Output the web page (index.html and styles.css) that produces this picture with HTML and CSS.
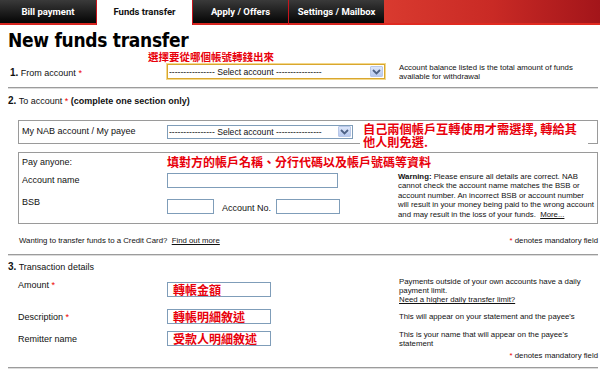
FILE: index.html
```html
<!DOCTYPE html>
<html lang="en">
<head>
  <meta charset="UTF-8" />
  <title>New funds transfer</title>
  <link rel="stylesheet" href="styles.css">
</head>
<body>
  <div class="tabs">
    <a href="#" class="tab">Bill payment</a>
    <a href="#" class="tab active">Funds transfer</a>
    <a href="#" class="tab">Apply / Offers</a>
    <a href="#" class="tab">Settings / Mailbox</a>
    <div class="tab-fill"></div>
  </div>

  <div class="main">
    <h1 class="title">New funds transfer</h1>
    <div class="cn cn-from">選擇要從哪個帳號轉錢出來</div>

    <div class="row row-from">
      <div class="label"><b class="num">1.</b> From account <span class="req">*</span></div>
      <div class="field">
        <div class="select select-from focus">
          <span class="select-text">---------------- Select account ----------------</span>
          <span class="arrow"><svg width="9" height="6" viewBox="0 0 9 6"><path d="M1 1 L4.5 4.5 L8 1" fill="none" stroke="#4d6185" stroke-width="1.8"/></svg></span>
        </div>
      </div>
      <div class="help">Account balance listed is the total amount of funds available for withdrawal</div>
    </div>

    <hr class="sep sep-1">

    <div class="step-head"><b class="num">2.</b> To account <span class="req">*</span> <b>(complete one section only)</b></div>

    <div class="box box-payee">
      <div class="label">My NAB account / My payee</div>
      <div class="select select-payee">
        <span class="select-text">---------------- Select account ----------------</span>
        <span class="arrow"><svg width="9" height="6" viewBox="0 0 9 6"><path d="M1 1 L4.5 4.5 L8 1" fill="none" stroke="#4d6185" stroke-width="1.8"/></svg></span>
      </div>
      <div class="cn cn-payee">自己兩個帳戶互轉使用才需選擇, 轉給其<br>他人則免選.</div>
    </div>

    <div class="box box-anyone">
      <div class="anyone-head">
        <div class="label">Pay anyone:</div>
        <div class="cn cn-anyone">填對方的帳戶名稱、分行代碼以及帳戶號碼等資料</div>
      </div>
      <div class="anyone-body">
        <div class="anyone-fields">
          <div class="frow frow-name">
            <div class="label">Account name</div>
            <div class="input input-name"></div>
          </div>
          <div class="frow frow-bsb">
            <div class="label label-bsb">BSB</div>
            <div class="input input-bsb"></div>
            <div class="acc-no">Account No.</div>
            <div class="input input-accno"></div>
          </div>
        </div>
        <div class="warning"><b>Warning:</b> Please ensure all details are correct. NAB cannot check the account name matches the BSB or account number. An incorrect BSB or account number will result in your money being paid to the wrong account and may result in the loss of your funds.&nbsp; <a href="#">More...</a></div>
      </div>
    </div>

    <div class="foot-line">
      <div>Wanting to transfer funds to a Credit Card? &nbsp;<a href="#">Find out more</a></div>
      <div class="mandatory"><span class="req">*</span> denotes mandatory field</div>
    </div>

    <hr class="sep sep-2">

    <div class="step-head step-3"><b class="num">3.</b> Transaction details</div>

    <div class="trow trow-amount">
      <div class="label">Amount <span class="req">*</span></div>
      <div class="field"><div class="input input-tx"><span class="cn">轉帳金額</span></div></div>
      <div class="help">Payments outside of your own accounts have a daily payment limit.<br><a href="#">Need a higher daily transfer limit?</a></div>
    </div>
    <div class="trow trow-desc">
      <div class="label">Description <span class="req">*</span></div>
      <div class="field"><div class="input input-tx"><span class="cn">轉帳明細敘述</span></div></div>
      <div class="help">This will appear on your statement and the payee's</div>
    </div>
    <div class="trow trow-remitter">
      <div class="label">Remitter name</div>
      <div class="field"><div class="input input-tx"><span class="cn">受款人明細敘述</span></div></div>
      <div class="help">This is your name that will appear on the payee's statement</div>
    </div>

    <div class="mandatory mandatory-end"><span class="req">*</span> denotes mandatory field</div>
    <hr class="sep sep-3">
  </div>
</body>
</html>
```

FILE: styles.css
```css
* {
  box-sizing: border-box;
}
body {
  margin: 0;
  font-family: "Liberation Sans", Arial, sans-serif;
  font-size: 9px;
  color: #111;
  background: #fff;
}
a {
  color: #111;
}

/* tabs */
.tabs {
  display: flex;
  height: 25px;
}
.tab {
  width: 96px;
  display: flex;
  align-items: center;
  justify-content: center;
  padding-bottom: 2px;
  background: linear-gradient(#3a3a3a, #111 70%, #000);
  color: #fff;
  font-family: Roboto, "Open Sans", sans-serif;
  font-weight: bold;
  font-size: 9.5px;
  text-decoration: none;
  border-left: 1px solid #c8141c;
  box-shadow: inset 0 -2px 0 #d6251f;
}
.tab:first-child {
  border-left: none;
}
.tab.active {
  background: #fff;
  color: #111;
  box-shadow: none;
}
.tab-fill {
  flex: 1;
  background: linear-gradient(90deg, #d93a2f, #c92a25 50%, #a3151a);
  box-shadow: inset 0 -2px 0 #e02a20;
}

.main {
  padding: 0 2px 0 8px;
}
.title {
  margin: 4px 0 0;
  font-family: "DejaVu Sans Condensed", "Liberation Sans", sans-serif;
  font-weight: bold;
  font-size: 19px;
  line-height: 22px;
  letter-spacing: -0.3px;
  color: #000;
}
.cn {
  font-family: "Noto Sans CJK TC", sans-serif;
  color: #e8000b;
  font-weight: bold;
}
.cn-from {
  margin-left: 140px;
  font-size: 10.5px;
  line-height: 11px;
}

.num {
  font-size: 10px;
}
.req {
  color: #e00;
}

/* step 1 */
.row {
  display: flex;
  align-items: flex-start;
}
.row .label {
  width: 159px;
  padding: 5px 0 0 2px;
  line-height: 11px;
}
.row .field {
  width: 232px;
}
.help {
  flex: 1;
  font-size: 7.8px;
  line-height: 9.3px;
}
.row-from .help {
  padding-top: 1px;
}

.select {
  display: flex;
  align-items: center;
  height: 15px;
  background: #fff;
  border: 1px solid #7f9db9;
  padding-left: 1px;
  font-size: 8.6px;
}
.select-text {
  flex: 1;
  white-space: nowrap;
  overflow: hidden;
}
.arrow {
  width: 13px;
  height: 11px;
  margin-right: 1px;
  display: flex;
  align-items: center;
  justify-content: center;
  background: linear-gradient(#dce6fa, #b7c9ef);
  border: 1px solid #b9c8e8;
  border-radius: 1px;
}
.select-from {
  width: 218px;
  margin-top: 2px;
}
.select.focus {
  border-color: #d9a72e;
  box-shadow: 0 0 0 1px #f3d88c;
}

.sep {
  border: none;
  border-top: 1px solid #9c9c9c;
  border-bottom: 1px solid #dcdcdc;
  margin: 0;
}
.sep-1 {
  margin-top: 5px;
}

/* step 2 */
.step-head {
  margin-top: 6px;
  line-height: 11px;
}
.box {
  margin-left: 10px;
  border: 1px solid #9a9a9a;
  position: relative;
}
.box .label {
  width: 148px;
  padding-left: 3px;
}
.box-payee {
  margin-top: 13px;
  height: 24px;
  display: flex;
  align-items: flex-start;
  padding-top: 4px;
}
.box-payee .label {
  padding-top: 1px;
}
.select-payee {
  width: 186px;
  height: 14px;
}
.cn-payee {
  position: absolute;
  left: 341px;
  top: 2px;
  width: 228px;
  padding: 0 3px;
  background: #fff;
  font-size: 12.2px;
  line-height: 13px;
}

.box-anyone {
  margin-top: 8px;
  height: 72px;
}
.anyone-head {
  display: flex;
  align-items: center;
  height: 18px;
}
.cn-anyone {
  font-size: 12px;
  line-height: 14px;
}
.anyone-body {
  display: flex;
}
.anyone-fields {
  width: 379px;
}
.frow {
  display: flex;
  align-items: center;
}
.frow-name {
  margin-top: 2px;
}
.frow-bsb {
  margin-top: 11px;
  align-items: flex-start;
}
.label-bsb {
  margin-top: -2px;
}
.input {
  height: 15px;
  border: 1px solid #7f9db9;
  background: #fff;
}
.input-name {
  width: 171px;
}
.input-bsb {
  width: 47px;
}
.acc-no {
  width: 62px;
  padding-left: 8px;
  padding-top: 4px;
}
.input-accno {
  width: 64px;
}
.warning {
  width: 197px;
  font-size: 7.8px;
  line-height: 9.6px;
  padding-top: 1px;
}

.foot-line {
  display: flex;
  justify-content: space-between;
  margin: 12px 0 0 11px;
  font-size: 7.8px;
  line-height: 10px;
}
.mandatory {
  font-size: 7.8px;
  line-height: 10px;
  text-align: right;
}
.sep-2 {
  margin-top: 8px;
}

/* step 3 */
.step-3 {
  margin-top: 5px;
}
.trow {
  display: flex;
  align-items: flex-start;
  margin-left: 10px;
}
.trow .label {
  width: 149px;
}
.trow .field {
  width: 232px;
}
.input-tx {
  width: 104px;
  display: flex;
  align-items: center;
  padding-left: 5px;
}
.input-tx .cn {
  font-size: 12px;
  line-height: 13px;
}
.trow-amount {
  margin-top: 4px;
  height: 32px;
}
.trow-amount .label {
  padding-top: 3px;
}
.trow-amount .field {
  padding-top: 5px;
}
.trow-desc {
  height: 22px;
}
.trow-desc .label,
.trow-desc .help {
  padding-top: 3px;
}
.trow-remitter .label {
  padding-top: 3px;
}
.trow-remitter .help {
  margin-top: -1px;
}
.mandatory-end {
  margin-top: 3px;
}
.sep-3 {
  margin-top: 6px;
}
```
